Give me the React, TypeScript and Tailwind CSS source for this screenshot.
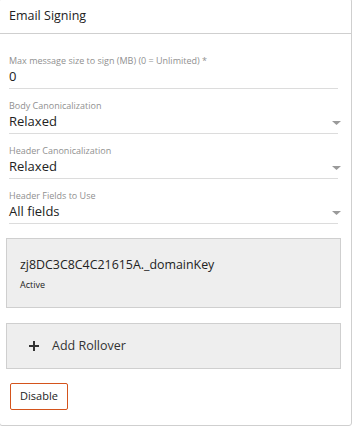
import React from "react";

const Caret = () => (
  <svg width="9" height="4" viewBox="0 0 9 4" className="absolute right-[-3px] top-[8px]">
    <polygon points="0,0 9,0 4.5,4" fill="#9a9a9a" />
  </svg>
);

function Field({ label, value, select }: { label: string; value: string; select?: boolean }) {
  return (
    <div className="mr-[13px] border-b border-[#dcdcdc] pb-[3px]">
      <div className="text-[9px] leading-[12px] text-[#909090]">{label}</div>
      <div className="relative mt-[1px] text-[13px] leading-[17px] text-[#222]">
        {value}
        {select && <Caret />}
      </div>
    </div>
  );
}

export default function App() {
  return (
    <div className="h-[432px] w-[358px] bg-white" style={{ fontFamily: '"Open Sans", "Noto Sans", sans-serif' }}>
      <div className="ml-[-1px] mt-[-2px] h-[428px] w-[353px] rounded-[3px] border border-[#cfcfcf]">
        <div className="flex h-[35px] items-center border-b border-[#cfcfcf] pl-[9px] pt-[1px] text-[12.5px] text-[#222]">
          Email Signing
        </div>
        <div className="flex flex-col gap-[11px] pl-[9px] pt-[21px]">
          <Field label="Max message size to sign (MB) (0 = Unlimited) *" value="0" />
          <Field label="Body Canonicalization" value="Relaxed" select />
          <Field label="Header Canonicalization" value="Relaxed" select />
          <Field label="Header Fields to Use" value="All fields" select />
        </div>
        <div className="mx-[6px] mt-[14px] flex h-[70px] w-[335px] flex-col justify-center border border-[#cfcfcf] bg-[#eeeeee] pl-[13px]">
          <div className="text-[12.4px] leading-[18px] text-[#222]">zj8DC3C8C4C21615A._domainKey</div>
          <div className="mt-[5px] text-[9px] leading-[12px] text-[#222]">Active</div>
        </div>
        <div className="mx-[6px] mt-[15px] flex h-[46px] w-[335px] items-center border border-[#cfcfcf] bg-[#eeeeee] pl-[22px] text-[12.5px] text-[#333]">
          <svg width="10" height="10" viewBox="0 0 10 10" className="mr-[13px]">
            <path d="M5 0V10M0 5H10" stroke="#333" strokeWidth="2" />
          </svg>
          Add Rollover
        </div>
        <button className="ml-[10px] mt-[14px] flex h-[27px] w-[58px] items-center justify-center rounded-[2px] border border-[#d4531c] bg-white text-[11px] text-[#222]">
          Disable
        </button>
      </div>
    </div>
  );
}
